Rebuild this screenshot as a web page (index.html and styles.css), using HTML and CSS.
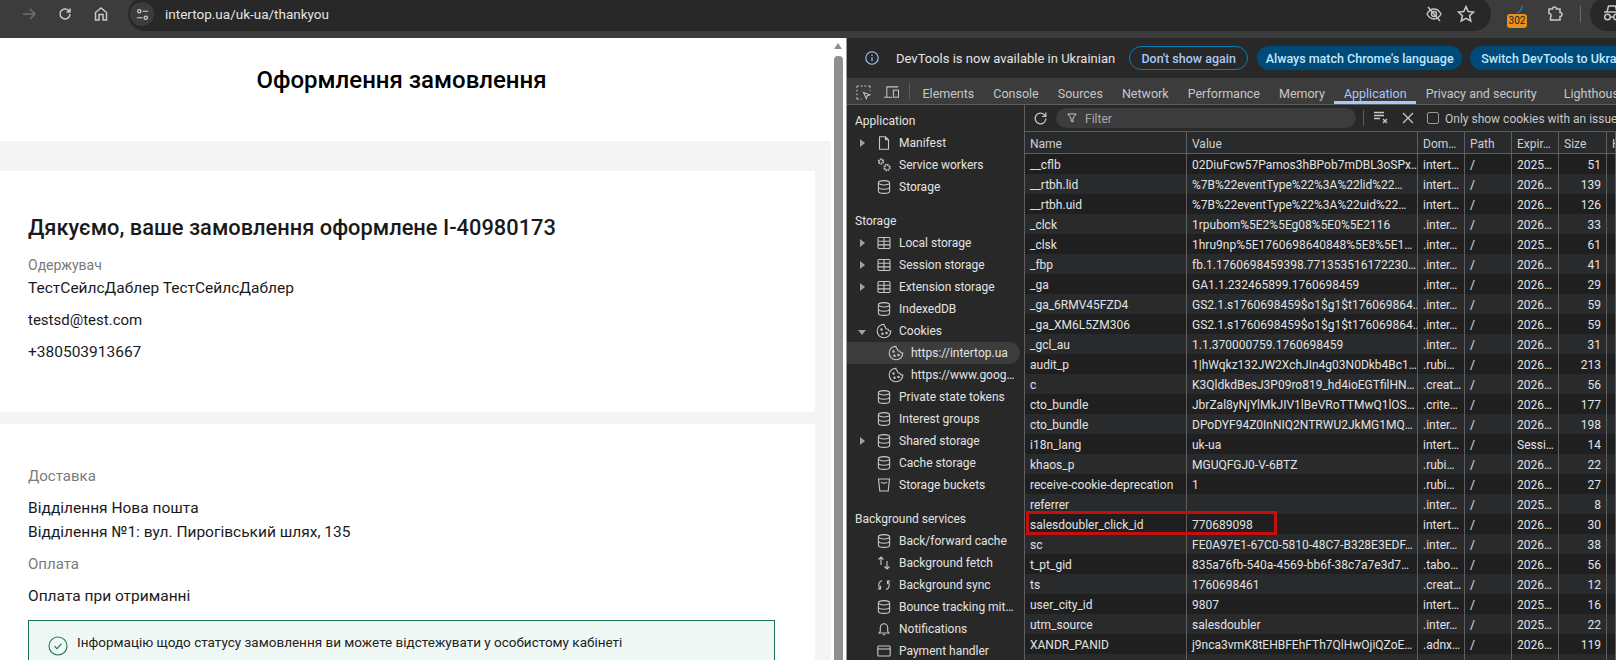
FILE: index.html
```html
<!DOCTYPE html>
<html lang="uk">
<head>
  <meta charset="UTF-8" />
  <meta name="viewport" content="width=device-width, initial-scale=1.0"/>
  <title>Оформлення замовлення</title>
  <link rel="stylesheet" href="styles.css">
</head>
<body>

<svg class="sprites" xmlns="http://www.w3.org/2000/svg">
  <symbol id="i-db" viewBox="0 0 14 14"><ellipse cx="7" cy="2.8" rx="5.6" ry="2.2"/><path d="M1.4 2.8v8.4c0 1.2 2.5 2.2 5.6 2.2s5.6-1 5.6-2.2V2.8M1.4 7c0 1.2 2.5 2.2 5.6 2.2s5.6-1 5.6-2.2"/></symbol>
  <symbol id="i-table" viewBox="0 0 14 14"><rect x="1" y="1.5" width="12" height="11" rx="1"/><path d="M1 5.2h12M1 8.9h12M7 1.5v11"/></symbol>
  <symbol id="i-cookie" viewBox="0 0 16 16"><path d="M8 1.2a6.8 6.8 0 1 0 6.8 6.8c-1.4.3-2.6-.5-2.8-1.8-1.500.2-2.800-.9-2.700-2.500C8.200 3.500 7.700 2.500 8 1.200z"/><circle cx="5.500" cy="6.500" r=".7"/><circle cx="6.500" cy="10.800" r=".7"/><circle cx="10.500" cy="10" r=".7"/></symbol>
</svg>

<div class="browser-bar">
  <svg class="nav-icon dim" viewBox="0 0 14 14"><path d="M1 7h12M8 2l5 5-5 5"/></svg>
  <svg class="nav-icon" viewBox="0 0 14 14"><path d="M12 7a5 5 0 1 1-1.500-3.600L12 5M12 1.500V5H8.500"/></svg>
  <svg class="nav-icon" viewBox="0 0 14 14"><path d="M1.500 13V5.500L7 1l5.500 4.500V13H9V7.500H5V13z"/></svg>
  <div class="omnibox">
    <span class="site-chip">
      <svg viewBox="0 0 14 14"><circle cx="3.500" cy="3.500" r="1.800"/><circle cx="10.500" cy="10.500" r="1.800"/><path d="M7 3.500h6M1 10.500h6"/></svg>
    </span>
    <span class="url">intertop.ua/uk-ua/thankyou</span>
    <span class="omni-icons">
      <svg viewBox="0 0 18 18"><path d="M2 9s2.800-5 7-5 7 5 7 5-2.800 5-7 5-7-5-7-5zM3 2l12 14"/><circle cx="9" cy="9" r="2.500"/></svg>
      <svg viewBox="0 0 16 16"><path d="M8 1.500l2 4.300 4.700.5-3.500 3.200 1 4.600L8 11.800l-4.200 2.300 1-4.600L1.300 6.300 6 5.800z"/></svg>
    </span>
  </div>
  <div class="ext-badge">
    <svg class="ext-tick" viewBox="0 0 8 8"><path d="M1 7.500C4 6.500 5.500 4 6 .5"/></svg>
    <span class="ext-count">302</span>
  </div>
  <svg class="puzzle" viewBox="0 0 16 16"><path d="M2 3h3.500a2 2 0 0 1 4 0H13v3.500a2 2 0 0 1 0 4V14H3.500v-3a2 2 0 0 0-1.500-3.500z"/></svg>
  <span class="bar-sep"></span>
  <div class="profile-pill">
    <svg viewBox="0 0 18 18"><path d="M1 8h16M4 8l1.500-6h7L14 8"/><circle cx="4.500" cy="13" r="2.800"/><circle cx="13.500" cy="13" r="2.800"/><path d="M7.300 13h3.400"/></svg>
  </div>
</div>

<div class="window">
  <div class="page">
    <div class="page-main">
      <div class="page-head">Оформлення замовлення</div>

      <div class="card card-first">
        <h1>Дякуємо, ваше замовлення оформлене I-40980173</h1>
        <div class="muted mt-15">Одержувач</div>
        <div class="line mt-3">ТестСейлсДаблер ТестСейлсДаблер</div>
        <div class="line email mt-12">testsd@test.com</div>
        <div class="line mt-12">+380503913667</div>
      </div>

      <div class="card card-second">
        <div class="muted">Доставка</div>
        <div class="line mt-12">Відділення Нова пошта</div>
        <div class="line mt-4">Відділення №1: вул. Пирогівський шлях, 135</div>
        <div class="muted mt-12">Оплата</div>
        <div class="line mt-12">Оплата при отриманні</div>
        <div class="notice">
          <svg viewBox="0 0 20 20"><circle cx="10" cy="10" r="9"/><path d="M6.500 10.200l2.500 2.500 4.500-5"/></svg>
          <span>Інформацію щодо статусу замовлення ви можете відстежувати у особистому кабінеті</span>
        </div>
      </div>
    </div>
    <div class="scrollbar">
      <span class="scroll-up"></span>
      <span class="scroll-thumb"></span>
    </div>
  </div>

  <div class="devtools">
    <div class="infobar">
      <svg class="info-icon" viewBox="0 0 14 14"><circle cx="7" cy="7" r="6.200"/><path d="M7 6.200v4M7 3.600v1.300"/></svg>
      <span class="info-text">DevTools is now available in Ukrainian</span>
      <button class="pill outline">Don't show again</button>
      <button class="pill">Always match Chrome's language</button>
      <button class="pill">Switch DevTools to Ukrainian</button>
    </div>

    <div class="tabbar">
      <svg class="tool-icon first" viewBox="0 0 16 16"><path d="M1 1h2M5 1h2M9 1h2M13 1h2M1 1v2M1 5v2M1 9v2M1 13v2h2M5 15h1M15 1v2M15 5v1M8 8l7 2.500-3 1-1 3z"/></svg>
      <svg class="tool-icon" viewBox="0 0 16 16"><path d="M3 13V2h12M0 13h8.500"/><rect x="10" y="5.500" width="5.500" height="7.500"/></svg>
      <span class="tab-sep"></span>
      <a class="tab">Elements</a>
      <a class="tab">Console</a>
      <a class="tab">Sources</a>
      <a class="tab">Network</a>
      <a class="tab">Performance</a>
      <a class="tab">Memory</a>
      <a class="tab active">Application</a>
      <a class="tab wide">Privacy and security</a>
      <a class="tab">Lighthouse</a>
    </div>

    <div class="panel">
      <div class="sidebar">
        <div class="side-head">Application</div>
        <div class="side-row"><span class="caret"></span><svg class="side-icon" viewBox="0 0 14 14"><path d="M2.500.8h6l3 3v9.400h-9zM8.500.8v3h3"/></svg>Manifest</div>
        <div class="side-row"><span class="caret none"></span><svg class="side-icon" viewBox="0 0 14 14"><circle class="gear-teeth" cx="4" cy="3.500" r="2.200"/><circle class="gear-teeth" cx="10" cy="9.500" r="2.700"/></svg>Service workers</div>
        <div class="side-row"><span class="caret none"></span><svg class="side-icon"><use href="#i-db"/></svg>Storage</div>

        <div class="side-head gap">Storage</div>
        <div class="side-row"><span class="caret"></span><svg class="side-icon"><use href="#i-table"/></svg>Local storage</div>
        <div class="side-row"><span class="caret"></span><svg class="side-icon"><use href="#i-table"/></svg>Session storage</div>
        <div class="side-row"><span class="caret"></span><svg class="side-icon"><use href="#i-table"/></svg>Extension storage</div>
        <div class="side-row"><span class="caret none"></span><svg class="side-icon"><use href="#i-db"/></svg>IndexedDB</div>
        <div class="side-row"><span class="caret open"></span><svg class="side-icon big"><use href="#i-cookie"/></svg>Cookies</div>
        <div class="side-row child selected"><svg class="side-icon big"><use href="#i-cookie"/></svg>https://intertop.ua</div>
        <div class="side-row child"><svg class="side-icon big"><use href="#i-cookie"/></svg>https://www.goog…</div>
        <div class="side-row"><span class="caret none"></span><svg class="side-icon"><use href="#i-db"/></svg>Private state tokens</div>
        <div class="side-row"><span class="caret none"></span><svg class="side-icon"><use href="#i-db"/></svg>Interest groups</div>
        <div class="side-row"><span class="caret"></span><svg class="side-icon"><use href="#i-db"/></svg>Shared storage</div>
        <div class="side-row"><span class="caret none"></span><svg class="side-icon"><use href="#i-db"/></svg>Cache storage</div>
        <div class="side-row"><span class="caret none"></span><svg class="side-icon" viewBox="0 0 14 14"><path d="M1.500 1h11l-1.300 12H2.800zM4 4c1 1.500 5 1.500 6 0"/></svg>Storage buckets</div>

        <div class="side-head gap">Background services</div>
        <div class="side-row"><span class="caret none"></span><svg class="side-icon"><use href="#i-db"/></svg>Back/forward cache</div>
        <div class="side-row"><span class="caret none"></span><svg class="side-icon" viewBox="0 0 14 14"><path d="M4 9V1M1.500 3.500L4 1l2.500 2.500M10 5v8M7.500 10.500L10 13l2.500-2.500"/></svg>Background fetch</div>
        <div class="side-row"><span class="caret none"></span><svg class="side-icon" viewBox="0 0 14 14"><path d="M5 2.500a4.800 4.800 0 0 0-1.500 8.300M3.500 7.800v3.200H.8M9 11.500a4.800 4.800 0 0 0 1.500-8.300M10.500 6.200V3h2.700"/></svg>Background sync</div>
        <div class="side-row"><span class="caret none"></span><svg class="side-icon"><use href="#i-db"/></svg>Bounce tracking mit…</div>
        <div class="side-row"><span class="caret none"></span><svg class="side-icon" viewBox="0 0 14 14"><path d="M2 11h10l-1.300-1.800V5.500a3.700 3.700 0 0 0-7.400 0v3.700zM7 1v.8M5.800 12.800h2.400"/></svg>Notifications</div>
        <div class="side-row"><span class="caret none"></span><svg class="side-icon" viewBox="0 0 14 14"><rect x=".8" y="2" width="12.400" height="10" rx="1"/><path d="M.8 5h12.400"/></svg>Payment handler</div>
      </div>

      <div class="cookies">
        <div class="cookie-toolbar">
          <svg class="reload" viewBox="0 0 14 14"><path d="M12 7a5 5 0 1 1-1.500-3.600L12 5M12 1.500V5H8.500"/></svg>
          <div class="filter">
            <svg viewBox="0 0 10 10"><path d="M.8 1h8.400L6 5v4L4 8V5z"/></svg>
            <span>Filter</span>
          </div>
          <span class="tool-sep"></span>
          <svg class="clear" viewBox="0 0 15 14"><path d="M0 1.500h10M0 4.500h10M0 7.500h6M9 8l4 4M13 8l-4 4"/></svg>
          <svg class="close" viewBox="0 0 12 12"><path d="M1 1l10 10M11 1L1 11"/></svg>
          <span class="checkbox"></span>
          <span class="check-label">Only show cookies with an issue</span>
        </div>

        <div class="table-wrap">
          <table class="cookie-table">
            <colgroup>
              <col class="c-name"><col class="c-value"><col class="c-small"><col class="c-small"><col class="c-small"><col class="c-size"><col class="c-rest">
            </colgroup>
            <thead>
              <tr><th>Name</th><th>Value</th><th>Dom…</th><th>Path</th><th>Expir…</th><th>Size</th><th>H</th></tr>
            </thead>
            <tbody>
              <tr><td>__cflb</td><td>02DiuFcw57Pamos3hBPob7mDBL3oSPx…</td><td>intert…</td><td>/</td><td>2025…</td><td class="num">51</td><td></td></tr>
              <tr><td>__rtbh.lid</td><td>%7B%22eventType%22%3A%22lid%22…</td><td>intert…</td><td>/</td><td>2026…</td><td class="num">139</td><td></td></tr>
              <tr><td>__rtbh.uid</td><td>%7B%22eventType%22%3A%22uid%22…</td><td>intert…</td><td>/</td><td>2026…</td><td class="num">126</td><td></td></tr>
              <tr><td>_clck</td><td>1rpubom%5E2%5Eg08%5E0%5E2116</td><td>.inter…</td><td>/</td><td>2026…</td><td class="num">33</td><td></td></tr>
              <tr><td>_clsk</td><td>1hru9np%5E1760698640848%5E8%5E1…</td><td>.inter…</td><td>/</td><td>2025…</td><td class="num">61</td><td></td></tr>
              <tr><td>_fbp</td><td>fb.1.1760698459398.771353516172230…</td><td>.inter…</td><td>/</td><td>2026…</td><td class="num">41</td><td></td></tr>
              <tr><td>_ga</td><td>GA1.1.232465899.1760698459</td><td>.inter…</td><td>/</td><td>2026…</td><td class="num">29</td><td></td></tr>
              <tr><td>_ga_6RMV45FZD4</td><td>GS2.1.s1760698459$o1$g1$t176069864…</td><td>.inter…</td><td>/</td><td>2026…</td><td class="num">59</td><td></td></tr>
              <tr><td>_ga_XM6L5ZM306</td><td>GS2.1.s1760698459$o1$g1$t176069864…</td><td>.inter…</td><td>/</td><td>2026…</td><td class="num">59</td><td></td></tr>
              <tr><td>_gcl_au</td><td>1.1.370000759.1760698459</td><td>.inter…</td><td>/</td><td>2026…</td><td class="num">31</td><td></td></tr>
              <tr><td>audit_p</td><td>1|hWqkz132JW2XchJIn4g03N0Dkb4Bc1…</td><td>.rubi…</td><td>/</td><td>2026…</td><td class="num">213</td><td></td></tr>
              <tr><td>c</td><td>K3QldkdBesJ3P09ro819_hd4ioEGTfilHN…</td><td>.creat…</td><td>/</td><td>2026…</td><td class="num">56</td><td></td></tr>
              <tr><td>cto_bundle</td><td>JbrZal8yNjYlMkJIV1lBeVRoTTMwQ1lOS…</td><td>.crite…</td><td>/</td><td>2026…</td><td class="num">177</td><td></td></tr>
              <tr><td>cto_bundle</td><td>DPoDYF94Z0InNIQ2NTRWU2JkMG1MQ…</td><td>.inter…</td><td>/</td><td>2026…</td><td class="num">198</td><td></td></tr>
              <tr><td>i18n_lang</td><td>uk-ua</td><td>intert…</td><td>/</td><td>Sessi…</td><td class="num">14</td><td></td></tr>
              <tr><td>khaos_p</td><td>MGUQFGJ0-V-6BTZ</td><td>.rubi…</td><td>/</td><td>2026…</td><td class="num">22</td><td></td></tr>
              <tr><td>receive-cookie-deprecation</td><td>1</td><td>.rubi…</td><td>/</td><td>2026…</td><td class="num">27</td><td></td></tr>
              <tr><td>referrer</td><td></td><td>.inter…</td><td>/</td><td>2025…</td><td class="num">8</td><td></td></tr>
              <tr><td>salesdoubler_click_id</td><td>770689098</td><td>intert…</td><td>/</td><td>2026…</td><td class="num">30</td><td></td></tr>
              <tr><td>sc</td><td>FE0A97E1-67C0-5810-48C7-B328E3EDF…</td><td>.inter…</td><td>/</td><td>2026…</td><td class="num">38</td><td></td></tr>
              <tr><td>t_pt_gid</td><td>835a76fb-540a-4569-bb6f-38c7a7e3d7…</td><td>.tabo…</td><td>/</td><td>2026…</td><td class="num">56</td><td></td></tr>
              <tr><td>ts</td><td>1760698461</td><td>.creat…</td><td>/</td><td>2026…</td><td class="num">12</td><td></td></tr>
              <tr><td>user_city_id</td><td>9807</td><td>intert…</td><td>/</td><td>2025…</td><td class="num">16</td><td></td></tr>
              <tr><td>utm_source</td><td>salesdoubler</td><td>.inter…</td><td>/</td><td>2025…</td><td class="num">22</td><td></td></tr>
              <tr><td>XANDR_PANID</td><td>j9nca3vmK8tEHBFEhFTh7QlHwOjiQZoE…</td><td>.adnx…</td><td>/</td><td>2026…</td><td class="num">119</td><td></td></tr>
              <tr><td></td><td></td><td></td><td></td><td></td><td></td><td></td></tr>
            </tbody>
          </table>
          <div class="red-mark"></div>
        </div>
      </div>
    </div>
  </div>
</div>

</body>
</html>
```

FILE: styles.css
```css
* {
  box-sizing: border-box;
}
html, body {
  height: 100%;
}
body {
  margin: 0;
  width: 1616px;
  height: 660px;
  overflow: hidden;
  display: flex;
  flex-direction: column;
  font-family: Roboto, "Liberation Sans", sans-serif;
  background-color: #fff;
}
.sprites {
  display: none;
}

/* browser chrome */
.browser-bar {
  height: 38px;
  flex: none;
  display: flex;
  align-items: flex-start;
  overflow: hidden;
  background-color: #3c3c3c;
  padding-left: 22px;
}
.nav-icon {
  width: 14px;
  height: 14px;
  margin: 7px 22px 0 0;
  fill: none;
  stroke: #c7c7c7;
  stroke-width: 1.5;
}
.nav-icon.dim {
  stroke: #6f6f6f;
}
.omnibox {
  width: 1363px;
  height: 34px;
  margin: -3px 0 0 -2px;
  border-radius: 17px;
  background-color: #282828;
  display: flex;
  align-items: center;
  padding: 0 0 0 5px;
}
.site-chip {
  width: 18px;
  height: 18px;
  margin-left: 0;
  border-radius: 50%;
  background-color: #3c3c3c;
  box-shadow: 0 0 0 3px #3c3c3c;
  display: flex;
  align-items: center;
  justify-content: center;
}
.site-chip svg {
  width: 13px;
  height: 13px;
  fill: none;
  stroke: #d0d0d0;
  stroke-width: 1.3;
}
.url {
  margin-left: 14px;
  color: #e3e3e3;
  font-size: 13.5px;
  flex: 1;
}
.omni-icons {
  display: flex;
  align-items: center;
  gap: 14px;
  margin-right: 16px;
}
.omni-icons svg {
  width: 18px;
  height: 18px;
  fill: none;
  stroke: #c7c7c7;
  stroke-width: 1.4;
}
.ext-badge {
  position: relative;
  width: 21px;
  height: 28px;
  margin-left: 16px;
}
.ext-tick {
  position: absolute;
  left: 9px;
  top: 5px;
  width: 8px;
  height: 9px;
  fill: none;
  stroke: #2f6fb0;
  stroke-width: 1.500;
}
.ext-count {
  position: absolute;
  left: 0;
  top: 14px;
  width: 20px;
  height: 14px;
  border-radius: 3px;
  background-color: #e8921c;
  color: #222;
  font-size: 10px;
  line-height: 14px;
  text-align: center;
}
.puzzle {
  width: 16px;
  height: 16px;
  margin: 6px 0 0 19px;
  fill: none;
  stroke: #c7c7c7;
  stroke-width: 1.500;
}
.bar-sep {
  width: 1px;
  height: 16px;
  margin: 6px 0 0 17px;
  background-color: #6a6a6a;
}
.profile-pill {
  flex: 1;
  height: 34px;
  margin: -3px 0 0 9px;
  border-radius: 17px 0 0 17px;
  background-color: #282828;
  padding: 7px 0 0 13px;
  overflow: hidden;
}
.profile-pill svg {
  width: 18px;
  height: 18px;
  fill: none;
  stroke: #c7c7c7;
  stroke-width: 1.500;
}

.window {
  flex: 1;
  display: flex;
  min-height: 0;
}

/* shop page */
.page {
  width: 847px;
  flex: none;
  display: flex;
  border-right: 1px solid #9a9a9a;
  overflow: hidden;
}
.page-main {
  width: 831px;
  background-color: #f4f4f4;
  color: #111;
}
.page-head {
  height: 103px;
  padding: 0 28px 20px 0;
  background-color: #fff;
  display: flex;
  align-items: center;
  justify-content: center;
  font-size: 24px;
  font-weight: 500;
  color: #000;
}
.card {
  width: 815px;
  background-color: #fff;
  padding-left: 28px;
}
.card-first {
  height: 241px;
  margin-top: 30px;
  padding-top: 45px;
}
.card-second {
  height: 300px;
  margin-top: 12px;
  padding-top: 42px;
}
.card h1 {
  margin: 0;
  font-size: 21.85px;
  line-height: 24px;
  font-weight: 500;
  color: #1a1a1a;
}
.muted {
  color: #7b7b7b;
  font-size: 14px;
  line-height: 20px;
}
.card-second .muted {
  font-size: 15px;
}
.line {
  font-size: 15.5px;
  line-height: 20px;
  color: #1a1a1a;
}
.line.email {
  font-size: 15px;
}
.mt-3 { margin-top: 3px; }
.mt-4 { margin-top: 4px; }
.mt-12 { margin-top: 12px; }
.mt-15 { margin-top: 15px; }
.notice {
  width: 747px;
  height: 70px;
  margin-top: 14px;
  padding: 11px 0 0 19px;
  border: 1px solid #1d6f5c;
  background-color: #eff8f4;
  display: flex;
  gap: 9px;
  font-size: 13.5px;
  line-height: 20px;
  color: #222;
}
.notice svg {
  width: 20px;
  height: 20px;
  margin-top: 4px;
  flex: none;
  fill: none;
  stroke: #1d6f5c;
  stroke-width: 1.100;
}
.scrollbar {
  width: 15px;
  padding-left: 3px;
  background-color: #fff;
  display: flex;
  flex-direction: column;
  align-items: flex-start;
}
.scroll-up {
  width: 0;
  height: 0;
  margin: 5px 0 0;
  border-left: 4.500px solid transparent;
  border-right: 4.500px solid transparent;
  border-bottom: 6px solid #8f8f8f;
}
.scroll-thumb {
  width: 9px;
  flex: 1;
  margin-top: 7px;
  border-radius: 4px 4px 0 0;
  background-color: #8f8f8f;
}

/* devtools */
.devtools {
  flex: 1;
  min-width: 0;
  display: flex;
  flex-direction: column;
  background-color: #282828;
  color: #e3e3e3;
  font-size: 12px;
  overflow: hidden;
}
.infobar {
  height: 40px;
  flex: none;
  display: flex;
  align-items: center;
  padding-left: 18px;
  white-space: nowrap;
}
.info-icon {
  width: 14px;
  height: 14px;
  flex: none;
  fill: none;
  stroke: #a8c7fa;
  stroke-width: 1.100;
}
.info-text {
  margin-left: 17px;
  font-size: 13px;
  color: #e3e3e3;
}
.pill {
  height: 24px;
  flex: none;
  margin-left: 9px;
  padding: 0 11px;
  border: 0;
  border-radius: 12px;
  background-color: #004a77;
  color: #c2e7ff;
  font-family: inherit;
  font-size: 12.500px;
  font-weight: 500;
}
.pill.outline {
  width: 119px;
  margin-left: 14px;
  padding: 0;
  border: 1px solid #0a7cb8;
  background-color: transparent;
  color: #a8c7fa;
}
.pill:nth-of-type(2) {
  width: 205px;
  padding: 0;
}
.pill:last-child {
  margin-left: 8px;
}
.tabbar {
  height: 27px;
  flex: none;
  display: flex;
  align-items: center;
  padding-left: 9px;
  background-color: #3c3c3c;
  border-bottom: 1px solid #5e5e5e;
  white-space: nowrap;
}
.tool-icon {
  width: 15px;
  height: 15px;
  flex: none;
  margin: 2px 10px 0 0;
  fill: none;
  stroke: #c7c7c7;
  stroke-width: 1.100;
}
.tool-icon.first {
  margin-right: 13px;
}
.tab-sep {
  width: 1px;
  height: 16px;
  flex: none;
  background-color: #5e5e5e;
  margin-right: 3px;
}
.tab {
  height: 26px;
  flex: none;
  padding: 0 9.5px;
  line-height: 31px;
  color: #c7c7c7;
  font-size: 12.5px;
}
.tab.active {
  color: #a8c7fa;
  border-bottom: 3px solid #a8c7fa;
}
.tab.wide {
  padding-right: 17.5px;
}
.panel {
  flex: 1;
  display: flex;
  min-height: 0;
}
.sidebar {
  width: 178px;
  flex: none;
  padding-top: 5px;
  border-right: 1px solid #5e5e5e;
  white-space: nowrap;
  overflow: hidden;
}
.side-head {
  height: 22px;
  line-height: 22px;
  padding-left: 8px;
  font-size: 12px;
  color: #e3e3e3;
}
.side-head.gap {
  margin-top: 12px;
}
.side-row {
  height: 22px;
  display: flex;
  align-items: center;
  padding-left: 13px;
  font-size: 12px;
  color: #e3e3e3;
}
.side-row.child {
  padding-left: 42px;
  width: 173px;
}
.side-row.selected {
  background-color: #3c3c3c;
  border-radius: 0 11px 11px 0;
}
.caret {
  width: 0;
  height: 0;
  margin-right: 12px;
  border-top: 4px solid transparent;
  border-bottom: 4px solid transparent;
  border-left: 5px solid #a0a0a0;
}
.caret.none {
  border-left-color: transparent;
}
.caret.open {
  margin-top: 3px;
  margin-right: 11px;
  margin-left: -2px;
  border-left: 4px solid transparent;
  border-right: 4px solid transparent;
  border-top: 5px solid #a0a0a0;
  border-bottom: 0;
}
.side-icon {
  width: 14px;
  height: 14px;
  flex: none;
  margin-right: 8px;
  fill: none;
  stroke: #c7c7c7;
  stroke-width: 1.100;
}
.side-icon.big {
  width: 16px;
  height: 16px;
  margin-left: -1px;
  margin-right: 7px;
}
.gear-teeth {
  stroke-width: 2;
  stroke-dasharray: 1.400 .700;
}
.cookies {
  flex: 1;
  min-width: 0;
  display: flex;
  flex-direction: column;
}
.cookie-toolbar {
  height: 27px;
  flex: none;
  display: flex;
  align-items: center;
  border-bottom: 1px solid #5e5e5e;
  padding-left: 8px;
  white-space: nowrap;
}
.reload {
  width: 15px;
  height: 15px;
  flex: none;
  fill: none;
  stroke: #c7c7c7;
  stroke-width: 1.200;
}
.filter {
  width: 300px;
  height: 20px;
  flex: none;
  margin-left: 8px;
  padding-left: 11px;
  border-radius: 10px;
  background-color: #3c3c3c;
  display: flex;
  align-items: center;
  gap: 8px;
  color: #a8a8a8;
}
.filter span {
  padding-top: 2px;
}
.filter svg {
  width: 10px;
  height: 10px;
  fill: none;
  stroke: #c7c7c7;
  stroke-width: 1;
}
.tool-sep {
  width: 1px;
  height: 16px;
  flex: none;
  margin-left: 7px;
  background-color: #5e5e5e;
}
.clear {
  width: 15px;
  height: 14px;
  flex: none;
  margin-left: 10px;
  fill: none;
  stroke: #c7c7c7;
  stroke-width: 1.300;
}
.close {
  width: 12px;
  height: 12px;
  flex: none;
  margin-left: 13px;
  fill: none;
  stroke: #c7c7c7;
  stroke-width: 1.300;
}
.checkbox {
  width: 12px;
  height: 12px;
  flex: none;
  margin-left: 13px;
  border: 1px solid #9a9a9a;
  border-radius: 2px;
}
.check-label {
  margin-left: 6px;
  padding-top: 2px;
  color: #c7c7c7;
}
.table-wrap {
  position: relative;
  flex: 1;
  overflow: hidden;
}
.cookie-table {
  width: 591px;
  table-layout: fixed;
  border-collapse: separate;
  border-spacing: 0;
  font-size: 12px;
  color: #e3e3e3;
}
.c-name { width: 162px; }
.c-value { width: 231px; }
.c-small { width: 47px; }
.c-size { width: 48px; }
.c-rest { width: 9px; }
.cookie-table th {
  height: 22px;
  padding: 2px 5px 0;
  font-weight: 400;
  text-align: left;
  color: #d0d0d0;
  background-color: #282a2c;
  border-right: 1px solid #5e5e5e;
  border-bottom: 1px solid #5e5e5e;
  overflow: hidden;
  white-space: nowrap;
}
.cookie-table td {
  height: 20px;
  padding: 2px 5px 0;
  border-right: 1px solid #5e5e5e;
  overflow: hidden;
  white-space: nowrap;
}
.cookie-table tbody tr:nth-child(odd) td {
  background-color: #1f1f1f;
}
.cookie-table tbody tr:nth-child(even) td {
  background-color: #282a2c;
}
.cookie-table td.num {
  text-align: right;
}
.red-mark {
  position: absolute;
  left: 1px;
  top: 379px;
  width: 251px;
  height: 24px;
  border: 3px solid #c80d0d;
}
```
